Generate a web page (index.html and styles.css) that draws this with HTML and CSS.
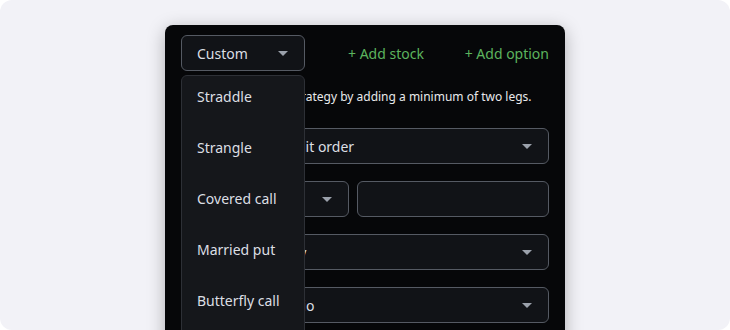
FILE: index.html
```html
<!DOCTYPE html>
<html>
<head>
<meta charset="utf-8">
<link rel="stylesheet" href="styles.css">
</head>
<body>
<div class="stage">
  <div class="panel">
    <div class="header">
      <div class="select strategy">
        <span class="label">Custom</span>
        <span class="caret"></span>
      </div>
      <div class="links">
        <span class="link">+ Add stock</span>
        <span class="link">+ Add option</span>
      </div>
    </div>
    <p class="desc">Build out your own strategy by adding a minimum of two legs.</p>
    <div class="rows">
      <div class="select wide"><span class="label">Order Type · Limit order</span><span class="caret"></span></div>
      <div class="pair">
        <div class="select half"><span class="label">Quantity</span><span class="caret"></span></div>
        <div class="input"></div>
      </div>
      <div class="select wide"><span class="label">Expirations · Day</span><span class="caret"></span></div>
      <div class="select wide"><span class="label">Account: Portfolio</span><span class="caret"></span></div>
    </div>
    <ul class="menu">
      <li>Straddle</li>
      <li>Strangle</li>
      <li>Covered call</li>
      <li>Married put</li>
      <li>Butterfly call</li>
    </ul>
  </div>
</div>
</body>
</html>
```
FILE: styles.css
```css
html, body {
  margin: 0;
  padding: 0;
  background: #ffffff;
}
body {
  width: 730px;
  height: 330px;
  overflow: hidden;
  font-family: "Noto Sans", "Open Sans", sans-serif;
}
.stage {
  width: 730px;
  height: 330px;
  background: #f2f2f7;
  border-radius: 12px;
  overflow: hidden;
  display: flex;
  justify-content: center;
}
.panel {
  position: relative;
  width: 400px;
  height: 340px;
  margin-top: 25px;
  box-sizing: border-box;
  padding: 10px 16px 0;
  background: #060709;
  border-radius: 8px;
  box-shadow: 0 4px 18px rgba(0, 0, 0, 0.28);
  flex-shrink: 0;
}
.header {
  display: flex;
  align-items: center;
  height: 36px;
}
.select {
  box-sizing: border-box;
  height: 36px;
  border: 1px solid #555a63;
  border-radius: 6px;
  background: #111317;
  display: flex;
  align-items: center;
  justify-content: space-between;
  padding: 0 16px 0 15px;
  color: #dcdfe4;
  font-size: 14px;
}
.strategy {
  width: 124px;
}
.caret {
  width: 0;
  height: 0;
  border-left: 5px solid transparent;
  border-right: 5px solid transparent;
  border-top: 5px solid #9ba1ab;
}
.links {
  flex: 1;
  display: flex;
  justify-content: space-between;
  padding-left: 43px;
}
.link {
  color: #5cb45e;
  font-size: 14px;
}
.desc {
  margin: 16px 0 0;
  height: 20px;
  line-height: 20px;
  font-size: 12px;
  color: #e8e9eb;
  white-space: nowrap;
}
.rows {
  margin-top: 21px;
  display: flex;
  flex-direction: column;
  gap: 17px;
}
.label {
  white-space: nowrap;
}
.pair {
  display: flex;
  gap: 8px;
}
.half {
  width: 168px;
}
.input {
  flex: 1;
  box-sizing: border-box;
  height: 36px;
  border: 1px solid #555a63;
  border-radius: 6px;
  background: #111317;
}
.menu {
  position: absolute;
  left: 16px;
  top: 50px;
  width: 124px;
  height: 300px;
  box-sizing: border-box;
  margin: 0;
  padding: 0;
  list-style: none;
  background: #15171b;
  border: 1px solid #2d3036;
  border-radius: 6px;
}
.menu li {
  padding: 11px 15px 20px;
  line-height: 20px;
  font-size: 14px;
  color: #dcdfe4;
  white-space: nowrap;
}
```
